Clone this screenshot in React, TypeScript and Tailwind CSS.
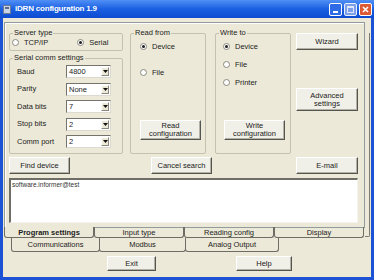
import React from 'react';

const BEIGE = 'bg-[#ece9d8]';

function Btn({ children, className = '' }: { children: React.ReactNode; className?: string }) {
  return (
    <div
      className={`flex shrink-0 flex-col items-center justify-center border border-t-white border-l-white border-r-[#55554f] border-b-[#55554f] bg-[#f1f0e8] leading-[8px] text-[#1a1a1a] shadow-[inset_-1px_-1px_0_#b4b2a6] ${className}`}
    >
      {children}
    </div>
  );
}

function Radio({ label, checked = false }: { label: string; checked?: boolean }) {
  return (
    <div className="flex h-[9px] items-center gap-[5px]">
      <span className="flex h-[7px] w-[7px] shrink-0 items-center justify-center rounded-full border border-[#8b8a82] bg-white">
        {checked && <span className="h-[3px] w-[3px] rounded-full bg-[#1e1e1e]" />}
      </span>
      <span className="leading-[9px]">{label}</span>
    </div>
  );
}

function Combo({ value }: { value: string }) {
  return (
    <div className="flex h-[13px] w-[45px] border border-t-[#74736c] border-l-[#74736c] border-r-[#dcdad0] border-b-[#dcdad0] bg-white">
      <span className="flex-1 pl-[2px] leading-[11px]">{value}</span>
      <span className="m-[1px] flex w-[8px] items-center justify-center border border-t-white border-l-white border-r-[#8a887e] border-b-[#8a887e] bg-[#ece9d8]">
        <svg width="5" height="3" viewBox="0 0 5 3">
          <path d="M0 0h5L2.5 3z" fill="#111" />
        </svg>
      </span>
    </div>
  );
}

function Group({ label, className = '', children }: { label: string; className?: string; children?: React.ReactNode }) {
  return (
    <div className={`relative shrink-0 rounded-[2px] border border-[#c4c1b1] ${className}`}>
      <span className={`absolute -top-[6px] left-[3px] px-[1px] leading-[9px] ${BEIGE}`}>{label}</span>
      {children}
    </div>
  );
}

function Tab({ label, w, selected = false, className = '' }: { label: string; w: string; selected?: boolean; className?: string }) {
  return (
    <div
      className={`flex shrink-0 items-center justify-center rounded-b-[3px] border-x border-b border-[#6d6c65] ${w} ${
        selected ? `font-bold ${BEIGE}` : ''
      } ${className}`}
    >
      {label}
    </div>
  );
}

export default function App() {
  const serial = [
    ['Baud', '4800'],
    ['Parity', 'None'],
    ['Data bits', '7'],
    ['Stop bits', '2'],
    ['Comm port', '2'],
  ];

  return (
    <div className="flex h-[280px] w-[374px] flex-col bg-[#1c52d4] font-['Liberation_Sans',Arial,sans-serif] text-[7.5px] text-[#1c1c1c]">
      {/* title bar */}
      <div className="flex h-[18px] shrink-0 items-center bg-gradient-to-b from-[#4f8ff5] via-[#1a5fe2] to-[#0d4bd0]">
        <svg className="ml-[3px]" width="8" height="9" viewBox="0 0 8 9">
          <rect x="0.5" y="0.5" width="7" height="8" fill="#c9d3e6" stroke="#6f7c96" />
          <rect x="2" y="2" width="4" height="2" fill="#5a6b8c" />
        </svg>
        <span className="ml-[4px] text-[8px] font-bold tracking-[-0.2px] text-white">iDRN configuration 1.9</span>
        <div className="ml-auto mr-[2px] flex gap-[2px]">
          <div className="flex h-[13px] w-[13px] items-end rounded-[2px] border border-white bg-[#2f6ae6] pb-[2px] pl-[3px]">
            <span className="h-[2px] w-[5px] bg-white" />
          </div>
          <div className="flex h-[13px] w-[13px] items-center justify-center rounded-[2px] border border-[#e8eefc] bg-[#7d9fea]">
            <span className="h-[7px] w-[7px] border border-t-2 border-[#dfe7fa]" />
          </div>
          <div className="flex h-[13px] w-[13px] items-center justify-center rounded-[2px] border border-white bg-[#dc5a34]">
            <svg width="7" height="7" viewBox="0 0 7 7">
              <path d="M1 1l5 5M6 1L1 6" stroke="white" strokeWidth="1.6" />
            </svg>
          </div>
        </div>
      </div>

      {/* window body */}
      <div className={`mx-[3px] flex h-[259px] flex-col ${BEIGE}`}>
        <div className="ml-[1px] mt-[4px] flex">
          <div className="flex w-[361px] flex-col">
            <div className="h-[206px] border border-[#919b9c] shadow-[inset_1px_1px_0_#ffffff]">
              {/* top section */}
              <div className="flex items-start pl-[4px] pt-[10px]">
                <div className="flex w-[114px] flex-col">
                  <Group label="Server type" className="h-[18px]">
                    <div className="flex h-full items-center pl-[2px]">
                      <Radio label="TCP/IP" />
                      <div className="ml-[29px]">
                        <Radio label="Serial" checked />
                      </div>
                    </div>
                  </Group>
                  <Group label="Serial comm settings" className="mt-[7px] h-[96px]">
                    <div className="flex flex-col gap-[4.5px] pl-[7px] pt-[6px]">
                      {serial.map(([k, v]) => (
                        <div key={k} className="flex h-[13px] items-center">
                          <span className="w-[49px]">{k}</span>
                          <Combo value={v} />
                        </div>
                      ))}
                    </div>
                  </Group>
                </div>

                <Group label="Read from" className="ml-[7px] h-[121px] w-[76px]">
                  <div className="flex flex-col pl-[9px] pt-[7.5px]">
                    <Radio label="Device" checked />
                    <div className="mt-[17px]">
                      <Radio label="File" />
                    </div>
                    <Btn className="mt-[43.5px] h-[20px] w-[61px]">
                      <span>Read</span>
                      <span>configuration</span>
                    </Btn>
                  </div>
                </Group>

                <Group label="Write to" className="ml-[9px] h-[121px] w-[76px]">
                  <div className="flex flex-col pl-[7px] pt-[7.5px]">
                    <Radio label="Device" checked />
                    <div className="mt-[9px]">
                      <Radio label="File" />
                    </div>
                    <div className="mt-[9px]">
                      <Radio label="Printer" />
                    </div>
                    <Btn className="ml-[1px] mt-[33.5px] h-[20px] w-[61px]">
                      <span>Write</span>
                      <span>configuration</span>
                    </Btn>
                  </div>
                </Group>

                <div className="ml-[5px] flex w-[62px] flex-col">
                  <Btn className="h-[17px] w-[62px]">Wizard</Btn>
                  <Btn className="mt-[38px] h-[23px] w-[62px]">
                    <span>Advanced</span>
                    <span>settings</span>
                  </Btn>
                </div>
              </div>

              {/* action row */}
              <div className="mt-[3px] flex pl-[4px]">
                <Btn className="h-[17px] w-[61px]">Find device</Btn>
                <Btn className="ml-[81px] h-[17px] w-[61px]">Cancel search</Btn>
                <Btn className="ml-[84px] h-[17px] w-[62px]">E-mail</Btn>
              </div>

              {/* log box */}
              <div className="ml-[4px] mt-[4px] h-[45px] w-[349px] border-l-2 border-t-2 border-r border-b border-t-[#6e6d66] border-l-[#6e6d66] border-r-[#f4f3ee] border-b-[#f4f3ee] bg-white pl-[1px] pt-[1px] text-[6.5px] leading-[8px] text-[#333]">
                software.informer@test
              </div>
            </div>

            {/* tabs */}
            <div className="-mt-[1px] flex h-[11px] leading-[9px]">
              <Tab label="Program settings" w="w-[90px]" selected />
              <Tab label="Input type" w="w-[90px]" />
              <Tab label="Reading config" w="w-[90px]" />
              <Tab label="Display" w="w-[90px]" />
            </div>
            <div className="flex h-[14px] pl-[7px]">
              <Tab label="Communications" w="w-[89px]" />
              <Tab label="Modbus" w="w-[87px]" className="-ml-[1px]" />
              <Tab label="Analog Output" w="w-[94px]" className="-ml-[1px]" />
            </div>
          </div>
          <div className="mt-[11px] h-[204px] w-[5px] rounded-br-[2px] border-b border-r border-[#7d7c74]" />
        </div>

        <div className="mt-[4px] flex h-[15px]">
          <Btn className="ml-[104px] h-[15px] w-[49px]">Exit</Btn>
          <Btn className="ml-[80px] h-[15px] w-[56px]">Help</Btn>
        </div>
      </div>
    </div>
  );
}
